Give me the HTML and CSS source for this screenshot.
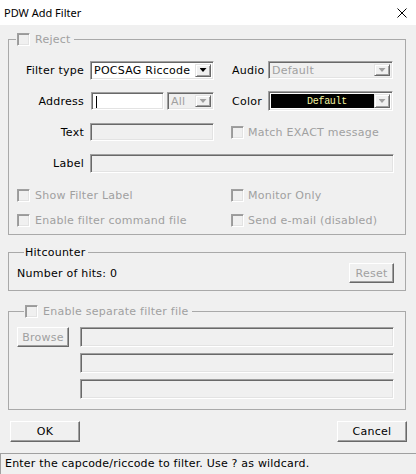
FILE: index.html
```html
<!DOCTYPE html>
<html>
<head>
<meta charset="utf-8">
<title>PDW Add Filter</title>
<link rel="stylesheet" href="styles.css">
</head>
<body>
<div class="titlebar">
  <span class="title">PDW Add Filter</span>
  <svg class="close" width="10" height="10" viewBox="0 0 10 10"><path d="M0.5 0.5 L9.5 9.5 M9.5 0.5 L0.5 9.5" stroke="#000" stroke-width="1" fill="none"/></svg>
</div>
<div class="client">
  <fieldset class="group g-filter">
    <legend class="legend dis"><span class="chk"></span><span>Reject</span></legend>
    <div class="form">
      <span class="lbl">Filter type</span>
      <div class="combo h19"><span class="field">POCSAG Riccode</span><span class="dbtn"><span class="arrow"></span></span></div>
      <span class="lbl2">Audio</span>
      <div class="combo h18 disabled"><span class="field">Default</span><span class="dbtn"><span class="arrow"></span></span></div>

      <span class="lbl">Address</span>
      <div class="addr">
        <div class="edit white h18 addr-edit"><span class="caret"></span></div>
        <div class="combo h18 disabled all"><span class="field">All</span><span class="dbtn"><span class="arrow"></span></span></div>
      </div>
      <span class="lbl2">Color</span>
      <div class="combo h20 color disabled-btn"><span class="field">Default</span><span class="dbtn"><span class="arrow"></span></span></div>

      <span class="lbl">Text</span>
      <div class="edit h18"></div>
      <div class="check dis match"><span class="chk"></span><span>Match EXACT message</span></div>

      <span class="lbl">Label</span>
      <div class="edit h19 wide"></div>
    </div>
    <div class="checks">
      <div class="check dis"><span class="chk"></span><span>Show Filter Label</span></div>
      <div class="check dis"><span class="chk"></span><span>Monitor Only</span></div>
      <div class="check dis"><span class="chk"></span><span>Enable filter command file</span></div>
      <div class="check dis"><span class="chk"></span><span>Send e-mail (disabled)</span></div>
    </div>
  </fieldset>

  <fieldset class="group g-hits">
    <legend class="legend"><span>Hitcounter</span></legend>
    <div class="hits-row">
      <span>Number of hits: 0</span>
      <span class="btn reset dis">Reset</span>
    </div>
  </fieldset>

  <fieldset class="group g-file">
    <legend class="legend dis"><span class="chk"></span><span>Enable separate filter file</span></legend>
    <div class="file-row">
      <span class="btn browse dis">Browse</span>
      <div class="file-inputs">
        <div class="edit h20"></div>
        <div class="edit h20"></div>
        <div class="edit h20"></div>
      </div>
    </div>
  </fieldset>
</div>
<div class="actions">
  <span class="btn action">OK</span>
  <span class="btn action">Cancel</span>
</div>
<div class="statusbar">Enter the capcode/riccode to filter. Use ? as wildcard.</div>
</body>
</html>
```

FILE: styles.css
```css
* { box-sizing: border-box; }
html, body { margin: 0; padding: 0; }
body {
  width: 416px;
  height: 474px;
  overflow: hidden;
  background: #f0f0f0;
  font-family: "DejaVu Sans", "Liberation Sans", sans-serif;
  font-size: 11px;
  line-height: 13px;
  letter-spacing: 0.25px;
  color: #000;
}

.titlebar {
  height: 25px;
  background: #fff;
  display: flex;
  align-items: center;
  justify-content: space-between;
  padding: 0 9px 0 4px;
}
.title {
  font-family: "Noto Sans", "Open Sans", sans-serif;
  font-size: 11px;
  letter-spacing: 0;
  color: #000;
}
.close { display: block; }

.client { padding-left: 8px; }

.group {
  width: 398px;
  margin: 0;
  padding: 0;
  border: 1px solid #a9a9a9;
  min-inline-size: 0;
}
.legend {
  display: flex;
  align-items: center;
  gap: 5px;
  height: 13px;
  margin-left: 7px;
  padding: 0 3px 0 1px;
}
.dis { color: #a0a0a0; }

.chk {
  display: inline-block;
  width: 13px;
  height: 13px;
  flex: none;
  background: #f0f0f0;
  border: 1px solid;
  border-color: #a0a0a0 #fff #fff #a0a0a0;
  box-shadow: inset 1px 1px #9a9a9a, inset -1px -1px #e3e3e3;
}

.g-filter { margin-top: 8px; padding: 14px 0 7px; }
.form {
  display: grid;
  grid-template-columns: 81px 124px 54px 125px;
  grid-template-rows: repeat(4, 20px);
  row-gap: 11px;
  align-items: center;
}
.lbl { text-align: right; padding-right: 6px; }
.lbl2 { padding-left: 18px; }

.edit, .combo {
  border: 1px solid;
  border-color: #a0a0a0 #fff #fff #a0a0a0;
  box-shadow: inset 1px 1px #696969, inset -1px -1px #e3e3e3;
  background: #f0f0f0;
}
.white { background: #fff; }
.h18 { height: 18px; }
.h19 { height: 19px; }
.h20 { height: 20px; }
.wide { grid-column: 2 / span 3; width: 304px; }

.combo {
  display: flex;
  align-items: stretch;
  padding: 2px;
  background: #fff;
}
.combo .field {
  flex: 1;
  display: flex;
  align-items: center;
  padding-left: 1px;
  white-space: nowrap;
  overflow: hidden;
}
.combo.disabled { background: #f0f0f0; }
.combo.disabled .field { color: #a0a0a0; }
.dbtn {
  width: 16px;
  flex: none;
  display: flex;
  align-items: center;
  justify-content: center;
  background: #f0f0f0;
  border: 1px solid;
  border-color: #e3e3e3 #696969 #696969 #e3e3e3;
  box-shadow: inset 1px 1px #fff, inset -1px -1px #a0a0a0;
}
.arrow {
  width: 7px;
  height: 4px;
  background: #000;
  clip-path: polygon(0 0, 100% 0, 50% 100%);
}
.combo.disabled .arrow, .disabled-btn .arrow { background: #a0a0a0; }

.addr { display: flex; gap: 3px; align-items: center; }
.addr-edit { width: 73px; margin-left: 1px; padding: 3px 0 0 4px; }
.caret { display: block; width: 1px; height: 12px; background: #000; }
.all { width: 47px; }

.color .field {
  background: #000;
  color: #f4f4a0;
  justify-content: center;
  font-family: "Liberation Mono", "DejaVu Sans Mono", monospace;
  font-size: 10px;
  letter-spacing: -0.3px;
  padding-left: 9px;
}

.check { display: flex; align-items: center; gap: 5px; height: 13px; }
.match { grid-column: 3 / span 2; padding-left: 17px; gap: 4px; }

.checks {
  display: grid;
  grid-template-columns: 214px auto;
  grid-auto-rows: 13px;
  row-gap: 12px;
  padding-left: 8px;
  margin-top: 16px;
}
.checks .check:nth-child(even) { gap: 4px; }

.btn {
  display: flex;
  align-items: center;
  justify-content: center;
  background: #f0f0f0;
  border: 1px solid;
  border-color: #fff #696969 #696969 #fff;
  box-shadow: inset -1px -1px #a0a0a0;
}

.g-hits { margin-top: 11px; padding: 4px 11px 7px 8px; }
.hits-row { display: flex; align-items: center; justify-content: space-between; height: 20px; }
.reset { width: 45px; height: 20px; }

.g-file { margin-top: 14px; padding: 9px 11px 10px 8px; }
.file-row { display: flex; gap: 11px; align-items: flex-start; }
.browse { width: 52px; height: 20px; }
.file-inputs { flex: 1; display: flex; flex-direction: column; gap: 6px; }

.actions {
  display: flex;
  justify-content: space-between;
  padding: 0 9px 0 10px;
  margin-top: 11px;
}
.action { width: 70px; height: 21px; }

.statusbar {
  margin-top: 11px;
  height: 21px;
  border-top: 1px solid #a0a0a0;
  border-left: 1px solid #a0a0a0;
  padding: 3px 0 0 4px;
  letter-spacing: 0.2px;
}
```
